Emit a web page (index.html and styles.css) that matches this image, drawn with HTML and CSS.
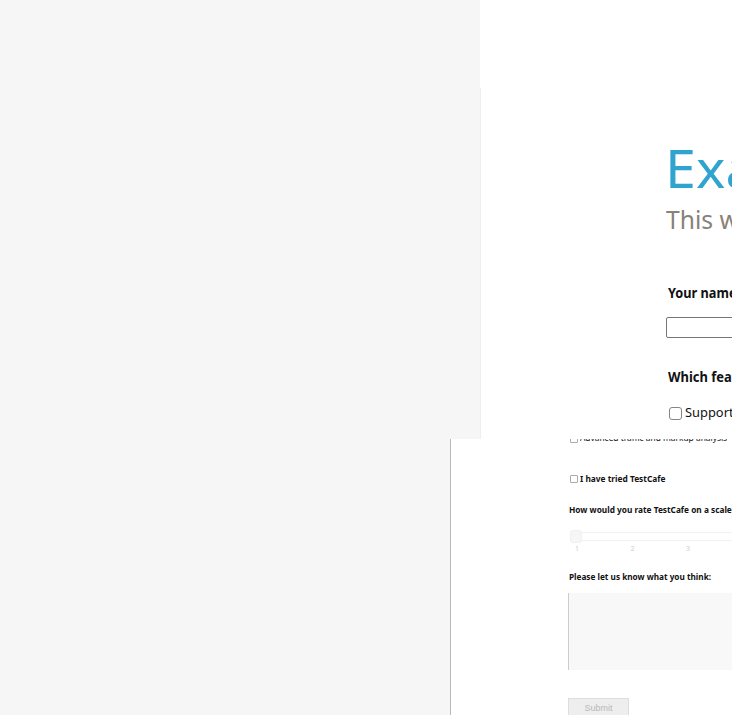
FILE: index.html
```
<!DOCTYPE html>
<html lang="en">
<head>
<meta charset="utf-8">
<title>Example</title>
<link rel="stylesheet" href="styles.css">
</head>
<body>
<section class="panel intro">
  <div class="side"><div class="side-top"></div><div class="side-rest"></div></div>
  <div class="intro-form">
    <h1><span>Exa</span></h1>
    <p class="lead"><span>This w</span></p>
    <h2><span>Your name</span></h2>
    <div class="name-field"></div>
    <h2 class="features"><span>Which fea</span></h2>
    <div class="option"><i class="check"></i><span>Support</span></div>
  </div>
</section>
<section class="panel details">
  <div class="margin"></div>
  <div class="detail-form">
    <div class="row clipped"><i class="check"></i><span class="analysis">Advanced traffic and markup analysis</span></div>
    <div class="row tried"><i class="check"></i><b class="tried-text">I have tried TestCafe</b></div>
    <b class="title rate">How would you rate TestCafe on a scale</b>
    <div class="slider"><div class="track"></div><div class="handle"></div></div>
    <div class="ticks"><span>1</span><span>2</span><span>3</span></div>
    <b class="title think">Please let us know what you think:</b>
    <div class="comments"></div>
    <div class="submit">Submit</div>
  </div>
</section>
</body>
</html>
```
FILE: styles.css
```
* { box-sizing: border-box; }
body {
  margin: 0;
  width: 732px;
  height: 715px;
  overflow: hidden;
  background: #fff;
  color: #111;
  font-family: "Noto Sans", "Open Sans", sans-serif;
}
.panel { display: flex; overflow: hidden; white-space: nowrap; }
.intro { height: 439px; }
.side { flex: none; width: 481px; }
.side-top { width: 480px; height: 88px; background: #f6f6f6; }
.side-rest { height: 351px; background: #f6f6f6; border-right: 1px solid #efefef; }
.intro-form { flex: none; width: 400px; padding: 133px 0 0 185px; }
h1, h2, p { margin: 0; }
h1 span, h2 span, .lead span, .option span, .analysis, .tried-text, .title {
  display: inline-block;
  transform-origin: 0 50%;
}
h1 { height: 70px; line-height: 70px; font-size: 53px; font-weight: 400; color: #2fa4cf; }
h1 span { margin-left: -1px; transform: scaleX(1.05); }
.lead { height: 37px; line-height: 33px; font-size: 25px; color: #888179; }
.lead span { transform: scaleX(.985); }
h2 { margin: 43px 0 0 2px; height: 20px; line-height: 20px; font-size: 14px; font-weight: 700; }
h2 span { transform: scaleX(.91); }
.name-field { margin-top: 14px; height: 21px; width: 220px; border: 1px solid #767676; border-radius: 2px; }
h2.features { margin-top: 29px; }
h2.features span { transform: scaleX(.925); }
.option { display: flex; align-items: center; margin: 16px 0 0 3px; height: 20px; font-size: 13px; }
.option span { position: relative; top: -1px; margin-left: 3px; transform: scaleX(.99); }
.check { flex: none; width: 13px; height: 13px; border: 1px solid #858585; border-radius: 3px; }
.details { height: 276px; }
.margin { flex: none; width: 451px; background: #f6f6f6; border-right: 1px solid #b9b9b9; }
.detail-form { flex: none; width: 400px; padding-left: 117px; font-size: 9px; }
.row { display: flex; align-items: center; height: 12px; padding-left: 2px; }
.row .check { width: 8px; height: 8px; border-color: #aaa; border-radius: 1px; }
.row span, .row b { margin-left: 2px; }
.clipped { margin-top: -7px; }
.clipped .check { margin-top: 2px; }
.clipped .analysis { margin-top: -2px; transform: scaleX(.93); }
.tried { margin-top: 29px; }
.row .tried-text { margin-top: -2px; transform: scaleX(.925); }
.title { display: block; margin-left: 1px; height: 12px; line-height: 12px; }
.tried-text, .title { font-size: 9px; }
.rate { margin-top: 19px; transform: scaleX(.92); }
.slider { display: flex; align-items: center; position: relative; margin-top: 14px; height: 13px; }
.track { width: 300px; height: 9px; margin-left: 3px; border: 1px solid #f1f1f1; }
.handle { position: absolute; left: 2px; top: 0; width: 12px; height: 13px; background: #f6f6f6; border: 1px solid #f0f0f0; border-radius: 3px; }
.ticks { display: flex; margin: 1px 0 0 7px; height: 9px; line-height: 9px; font-size: 7px; color: #ccc; }
.ticks span { width: 55.5px; }
.think { margin-top: 18px; transform: scaleX(.912); }
.comments { margin-top: 10px; height: 77px; background: #f8f8f8; border-left: 1px solid #ccc; }
.submit { margin-top: 28px; width: 61px; height: 20px; border: 1px solid #ddd; background: #eee; color: #b8b8b8; font: 9px/18px "Liberation Sans", sans-serif; text-align: center; }
```
